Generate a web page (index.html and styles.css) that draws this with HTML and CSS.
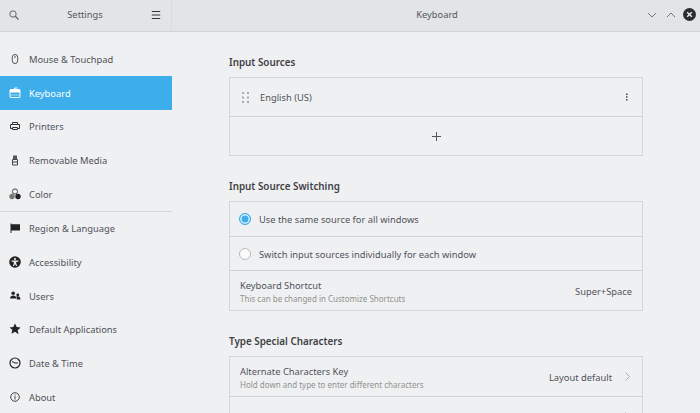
FILE: index.html
```html
<!DOCTYPE html>
<html lang="en">
<head>
<meta charset="utf-8">
<title>Keyboard</title>
<link rel="stylesheet" href="styles.css">
</head>
<body>
<div class="window">
  <header class="titlebar">
    <div class="tb-left">
      <svg class="ic" viewBox="0 0 10 10"><circle cx="4" cy="4" r="3.200" fill="none" stroke="#666" stroke-width="1"/><path d="M6.300 6.300L9.500 9.500" stroke="#666" stroke-width="1.300"/></svg>
      <span class="tb-title">Settings</span>
      <svg class="ic" viewBox="0 0 10 10"><path d="M.8 1.500h8.400M.8 5h8.400M.8 8.500h8.400" stroke="#333" stroke-width="1.200"/></svg>
    </div>
    <div class="tb-right">
      <span class="tb-title">Keyboard</span>
      <div class="tb-controls">
        <svg class="ctl" viewBox="0 0 10 10"><path d="M1 3l4 4 4-4" fill="none" stroke="#777" stroke-width="1"/></svg>
        <svg class="ctl" viewBox="0 0 10 10"><path d="M1 7l4-4 4 4" fill="none" stroke="#777" stroke-width="1"/></svg>
        <svg class="close" viewBox="0 0 13 13"><circle cx="6.500" cy="6.500" r="6.500" fill="#2b2d30"/><path d="M4.200 4.200l4.600 4.600M8.800 4.200l-4.600 4.600" stroke="#eee" stroke-width="1.400"/></svg>
      </div>
    </div>
  </header>
  <div class="body">
    <nav class="sidebar">
      <div class="nav-item"><svg class="nav-ic" viewBox="0 0 12 12"><rect x="3.300" y="1.500" width="5.400" height="9" rx="2.700" fill="none" stroke="#555" stroke-width="1"/><path d="M6 3v2" stroke="#555"/></svg>Mouse &amp; Touchpad</div>
      <div class="nav-item active"><svg class="nav-ic" viewBox="0 0 12 12"><rect x="1" y="2.500" width="10" height="8" rx="1" fill="none" stroke="#fff"/><path d="M1 2.500h10v3H1z" fill="#fff"/><path d="M5.500 2.500V1h3" fill="none" stroke="#fff"/><path d="M2.500 8h7" stroke="#fff" stroke-dasharray="1 1"/></svg>Keyboard</div>
      <div class="nav-item"><svg class="nav-ic" viewBox="0 0 12 12"><path d="M3.500 4V2.500h5V4M3 8.500H1.500V4.500h9v4H9" fill="none" stroke="#333" stroke-width="1"/><path d="M3.500 7.500h5v2h-5z" fill="none" stroke="#333"/></svg>Printers</div>
      <div class="nav-item"><svg class="nav-ic" viewBox="0 0 12 12"><path d="M4 1.500h4v3.500H4z" fill="#555"/><path d="M3.500 5.500h5v5.500h-5z" fill="none" stroke="#444"/><path d="M3.500 8h5" stroke="#444"/></svg>Removable Media</div>
      <div class="nav-item"><svg class="nav-ic" viewBox="0 0 12 12"><circle cx="6" cy="3.500" r="2.600" fill="none" stroke="#444"/><circle cx="3" cy="8.500" r="2.700" fill="#777"/><circle cx="9" cy="8.500" r="2.700" fill="#222"/></svg>Color</div>
      <div class="nav-sep"></div>
      <div class="nav-item"><svg class="nav-ic" viewBox="0 0 12 12"><path d="M1.500 1.500h1v.7h8.500v6.300H2.500V11h-1z" fill="#222"/></svg>Region &amp; Language</div>
      <div class="nav-item"><svg class="nav-ic" viewBox="0 0 12 12"><circle cx="6" cy="6" r="5.800" fill="#222"/><circle cx="6" cy="3" r="1.100" fill="#eee"/><path d="M2.500 4.500h7v1L7.200 6v1.500l1 2.500H7L6 8 5 10H3.800l1-2.500V6l-2.300-.5z" fill="#eee"/></svg>Accessibility</div>
      <div class="nav-item"><svg class="nav-ic" viewBox="0 0 12 12"><circle cx="4.200" cy="3.300" r="1.800" fill="#222"/><path d="M1 8.500c0-4 6.400-4 6.400 0z" fill="#222"/><circle cx="8.800" cy="5" r="1.400" fill="#222"/><path d="M7.800 9.500c0-1 0-2-.6-2.700 1.800-1.200 4.300 0 4.300 2.700z" fill="#222"/></svg>Users</div>
      <div class="nav-item"><svg class="nav-ic" viewBox="0 0 12 12"><path d="M6 .5l1.700 3.600 3.900.5-2.900 2.700.8 3.900L6 8.800 2.500 10.700l.8-3.900L.4 4.600l3.900-.5z" fill="#222"/></svg>Default Applications</div>
      <div class="nav-item"><svg class="nav-ic" viewBox="0 0 12 12"><circle cx="6" cy="6" r="5" fill="none" stroke="#222" stroke-width="1.200"/><path d="M3 4.500L6 6h3" fill="none" stroke="#222"/></svg>Date &amp; Time</div>
      <div class="nav-item"><svg class="nav-ic" viewBox="0 0 12 12"><circle cx="6" cy="6" r="4.300" fill="none" stroke="#444"/><path d="M6 5.200v3.300M6 3.500v1" stroke="#444"/></svg>About</div>
    </nav>
    <main class="content">
      <h2 class="heading">Input Sources</h2>
      <section class="panel">
        <div class="row r38 src">
          <svg class="grip" viewBox="0 0 7 11"><g fill="#aaa"><rect width="2" height="2"/><rect x="5" width="2" height="2"/><rect y="4.500" width="2" height="2"/><rect x="5" y="4.500" width="2" height="2"/><rect y="9" width="2" height="2"/><rect x="5" y="9" width="2" height="2"/></g></svg>
          <span class="label">English (US)</span>
          <svg class="more" viewBox="0 0 4 8"><g fill="#444"><rect x="1" y=".5" width="1.500" height="1.500"/><rect x="1" y="3.200" width="1.500" height="1.500"/><rect x="1" y="6" width="1.500" height="1.500"/></g></svg>
        </div>
        <div class="row r39 add"><svg class="plus" viewBox="0 0 9 9"><path d="M4.500 0v9M0 4.500h9" stroke="#555"/></svg></div>
      </section>
      <h2 class="heading">Input Source Switching</h2>
      <section class="panel">
        <div class="row r34 opt"><span class="radio on"></span><span class="label">Use the same source for all windows</span></div>
        <div class="row r34 opt"><span class="radio"></span><span class="label">Switch input sources individually for each window</span></div>
        <div class="row r40 between"><div><div class="label">Keyboard Shortcut</div><div class="sub">This can be changed in Customize Shortcuts</div></div><span class="label">Super+Space</span></div>
      </section>
      <h2 class="heading">Type Special Characters</h2>
      <section class="panel">
        <div class="row r39 between first"><div><div class="label">Alternate Characters Key</div><div class="sub">Hold down and type to enter different characters</div></div><span class="value"><span class="label">Layout default</span><svg class="chev" viewBox="0 0 5 9"><path d="M.5.500l4 4-4 4" fill="none" stroke="#aaa"/></svg></span></div>
        <div class="row r40 between"><div></div><span class="value"><svg class="chev" viewBox="0 0 5 9"><path d="M.5.500l4 4-4 4" fill="none" stroke="#aaa"/></svg></span></div>
      </section>
    </main>
  </div>
</div>
</body>
</html>
```
FILE: styles.css
```css
* { box-sizing: border-box; }
html, body { margin: 0; height: 100%; overflow: hidden; }
body { font-family: "Noto Sans", sans-serif; font-size: 9.33px; color: #4d4f53; background: #eff0f2; }
.window { width: 700px; height: 413px; display: flex; flex-direction: column; overflow: hidden; }
.titlebar { height: 32px; flex: none; display: flex; background: #e3e4e6; border-bottom: 1px solid #d2d3d5; }
.tb-left { width: 172px; flex: none; display: flex; align-items: center; justify-content: space-between; padding: 0 10px 2px 9px; border-right: 1px solid #dbdcde; }
.tb-right { flex: 1; position: relative; display: flex; align-items: center; justify-content: center; padding: 0 0 2px 2px; }
.tb-title { color: #55575a; }
.tb-controls { position: absolute; right: 4px; top: 8px; display: flex; align-items: center; gap: 9px; }
.ic { width: 10px; height: 10px; }
.ctl { width: 10px; height: 10px; }
.close { width: 13px; height: 13px; margin-left: -2px; }
.body { flex: 1; display: flex; min-height: 0; }
.sidebar { width: 172px; flex: none; padding-top: 10.5px; }
.nav-item { height: 33.7px; display: flex; align-items: center; gap: 8.5px; padding: 0 8.5px; color: #4f5259; white-space: nowrap; }
.nav-ic { width: 12px; height: 12px; flex: none; margin-top: -1px; }
.nav-item.active { background: #3daee9; color: #fff; }
.nav-sep { height: 1px; background: #d7d8da; }
.content { flex: 1; padding: 0 57px; min-width: 0; }
.heading { margin: 22px 0 7px; height: 16px; line-height: 16px; font-size: 9.85px; font-weight: 600; color: #3f4145; }
.panel { border: 1px solid #d5d6d8; }
.row { display: flex; align-items: center; padding: 0 10px; }
.row + .row { border-top: 1px solid #d0d1d3; }
.r40 { height: 40px; }
.r39 { height: 39px; }
.r38 { height: 38px; }
.r34 { height: 34px; }
.src { gap: 11px; padding-left: 12px; }
.add { justify-content: center; }
.plus { width: 9px; height: 9px; }
.grip { width: 7px; height: 11px; flex: none; }
.more { width: 4px; height: 8px; margin-left: auto; margin-right: 3px; }
.label { color: #4f5259; line-height: 14px; padding-top: 2px; }
.sub { font-size: 8px; line-height: 11px; color: #90928f; }
.between { justify-content: space-between; }
.opt { gap: 8px; padding-left: 9px; }
.radio { width: 12px; height: 12px; border-radius: 50%; background: #fbfbfb; border: 1px solid #b9babc; flex: none; }
.radio.on { background: #3daee9; border: 1px solid #3daee9; box-shadow: inset 0 0 0 1.500px #dff1fb; }
.value { display: flex; align-items: center; gap: 13px; }
.chev { width: 5px; height: 9px; margin-right: 2px; }
```
